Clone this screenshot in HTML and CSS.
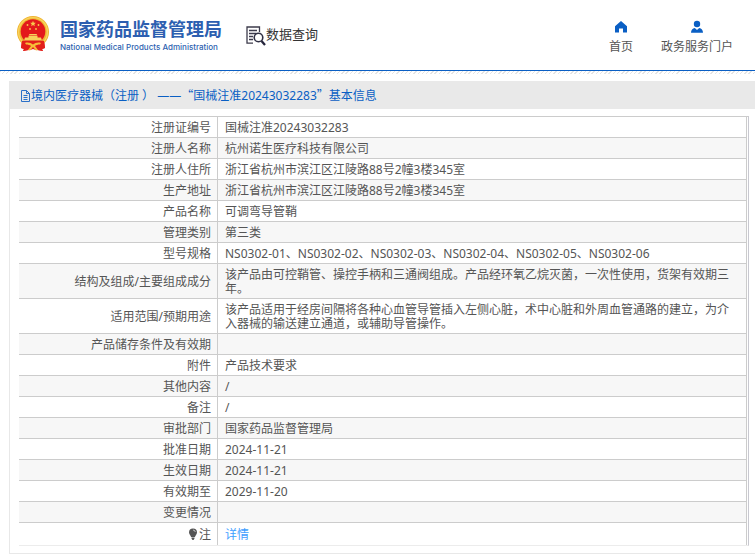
FILE: index.html
```html
<!DOCTYPE html>
<html lang="zh-CN">
<head>
<meta charset="utf-8">
<title>国家药品监督管理局 数据查询</title>
<meta name="viewport" content="width=device-width, initial-scale=1">
<link rel="stylesheet" href="styles.css">
</head>
<body>
<header class="header">
  <div class="brand">
    <svg class="emblem" viewBox="0 0 32 36" aria-hidden="true">
      <path d="M5 24h22l1 8-3 1 1 2-5-1-5-1-5 1-5 1 1-2-3-1z" fill="#e3201b"/>
      <circle cx="16" cy="16" r="16" fill="#efb431"/>
      <circle cx="16" cy="16" r="14.4" fill="none" stroke="#f8d35d" stroke-width="1.4"/>
      <circle cx="16" cy="15.5" r="12.3" fill="#e3181b"/>
      <path d="M5 25l5-1h12l5 1 1 7-3 1 1 2-6-1-4-1-4 1-6 1 1-2-3-1z" fill="#e3201b"/>
      <path d="M16 4.800l.8 1.900 2 .1-1.500 1.400.5 2L16 9.100l-1.800 1.100.5-2-1.500-1.400 2-.1z" fill="#f8ca4d"/>
      <g fill="#f8ca4d"><circle cx="10.500" cy="9" r=".9"/><circle cx="21.500" cy="9" r=".9"/><circle cx="13" cy="13" r=".9"/><circle cx="19" cy="13" r=".9"/></g>
      <path d="M12.500 18h7l1 1.500h-9zM11.500 20h9v1.500h3.500l1 3H7l1-3h3.500z" fill="#f7cf5a"/>
      <path d="M8 27c3-1 6 0 8 1.500 2-1.500 5-2.500 8-1.500l-1 1.500c-2 0-4 .5-5 1.500l3 4-2 .5-3-3.500-3 3.500-2-.5 3-4c-1-1-3-1.500-5-1.500z" fill="#f6bd38"/>
    </svg>
    <div class="brand-names">
      <span class="brand-cn">国家药品监督管理局</span>
      <span class="brand-en">National Medical Products Administration</span>
    </div>
  </div>
  <div class="query">
    <svg class="query-icon" viewBox="0 0 20 20" aria-hidden="true">
      <path d="M7 17.200H1V1h12.500v5M3 4.500h8M3 7.500h7M3 10.500h4M3 13.500h4" fill="none" stroke="#3c3b4b" stroke-width="1.300"/>
      <circle cx="12.500" cy="11.500" r="4.300" fill="#fff" stroke="#303044" stroke-width="1.600"/>
      <path d="M15.500 15l3.500 4" stroke="#25253c" stroke-width="2.300"/>
    </svg>
    <span>数据查询</span>
  </div>
  <nav class="nav">
    <a href="#home">
      <svg viewBox="0 0 14 14" aria-hidden="true"><path d="M7 1l6 5.300V12.500H9V8.500H5v4H1V6.300z" fill="#0a5fc4"/></svg>
      <span>首页</span>
    </a>
    <a href="#portal">
      <svg viewBox="0 0 14 14" aria-hidden="true"><circle cx="7" cy="4" r="3.200" fill="#0a5fc4"/><path d="M1 12.800c0-3 1.500-4.600 3.800-4.900L7 10l2.200-2.100c2.300.3 3.800 1.900 3.800 4.900z" fill="#0a5fc4"/></svg>
      <span>政务服务门户</span>
    </a>
  </nav>
</header>
<div class="hatch"></div>
<main class="panel">
  <h1 class="panel-title">
    <svg viewBox="0 0 11 12" aria-hidden="true"><path d="M1.500.5h5l3 3v8h-8zM6.500.5v3h3M3.500 5.500h4M3.500 7.500h4M3.500 9.500h4" fill="none" stroke="#2b70c8"/></svg>
    <span>境内医疗器械（注册 ） ——<span class="quote">“</span>国械注准20243032283<span class="quote">”</span>基本信息</span>
  </h1>
  <div class="table-wrap">
    <table class="info">
      <tbody>
        <tr><th scope="row">注册证编号</th><td>国械注准20243032283</td></tr>
        <tr><th scope="row">注册人名称</th><td>杭州诺生医疗科技有限公司</td></tr>
        <tr><th scope="row">注册人住所</th><td>浙江省杭州市滨江区江陵路88号2幢3楼345室</td></tr>
        <tr><th scope="row">生产地址</th><td>浙江省杭州市滨江区江陵路88号2幢3楼345室</td></tr>
        <tr><th scope="row">产品名称</th><td>可调弯导管鞘</td></tr>
        <tr><th scope="row">管理类别</th><td>第三类</td></tr>
        <tr><th scope="row">型号规格</th><td>NS0302-01、NS0302-02、NS0302-03、NS0302-04、NS0302-05、NS0302-06</td></tr>
        <tr><th scope="row">结构及组成/主要组成成分</th><td>该产品由可控鞘管、操控手柄和三通阀组成。产品经环氧乙烷灭菌，一次性使用，货架有效期三年。</td></tr>
        <tr><th scope="row">适用范围/预期用途</th><td>该产品适用于经房间隔将各种心血管导管插入左侧心脏，术中心脏和外周血管通路的建立，为介入器械的输送建立通道，或辅助导管操作。</td></tr>
        <tr><th scope="row">产品储存条件及有效期</th><td></td></tr>
        <tr><th scope="row">附件</th><td>产品技术要求</td></tr>
        <tr><th scope="row">其他内容</th><td>/</td></tr>
        <tr><th scope="row">备注</th><td>/</td></tr>
        <tr><th scope="row">审批部门</th><td>国家药品监督管理局</td></tr>
        <tr><th scope="row">批准日期</th><td>2024-11-21</td></tr>
        <tr><th scope="row">生效日期</th><td>2024-11-21</td></tr>
        <tr><th scope="row">有效期至</th><td>2029-11-20</td></tr>
        <tr><th scope="row">变更情况</th><td></td></tr>
        <tr class="note"><th scope="row"><svg viewBox="0 0 10 12" aria-hidden="true"><path d="M5 .5a4 4 0 0 1 4 4C9 6.500 7 7.500 7 9H3C3 7.500 1 6.500 1 4.500a4 4 0 0 1 4-4zM3.500 9.500h3v1L5.500 12h-1l-1-1.500z" fill="#555"/><path d="M5 2q2 0 2.300 2" fill="none" stroke="#ddd" stroke-width=".8"/></svg>注</th><td><a href="#detail">详情</a></td></tr>
      </tbody>
    </table>
  </div>
</main>
</body>
</html>
```
FILE: styles.css
```css
* {
  box-sizing: border-box;
}

body {
  margin: 0;
  background: #fff;
  color: #555;
  font: 12px/14px "Noto Sans", "Noto Sans CJK SC", sans-serif;
}

a {
  text-decoration: none;
}

.header {
  display: flex;
  align-items: flex-start;
  height: 71px;
  padding: 16px 22px 0 17px;
  border-bottom: 1px solid #0a5fc4;
}

.brand {
  display: flex;
  gap: 11px;
}

.emblem {
  width: 32px;
  height: 36px;
}

.brand-names {
  display: flex;
  flex-direction: column;
  color: #2d5fb0;
  white-space: nowrap;
}

.brand-cn {
  font: bold 18px/25px "Noto Sans CJK SC", sans-serif;
}

.brand-en {
  font: 500 8px/12px Inter, sans-serif;
}

.query {
  display: flex;
  align-items: flex-start;
  margin: 10px 0 0 24px;
  color: #333;
  font: 13px/16px "Noto Sans CJK SC", sans-serif;
}

.query-icon {
  width: 20px;
  height: 20px;
}

.nav {
  display: flex;
  gap: 28px;
  margin: 4px 0 0 auto;
}

.nav a {
  display: flex;
  flex-direction: column;
  align-items: center;
  gap: 6px;
  color: #555;
}

.nav svg {
  width: 14px;
  height: 14px;
}

.hatch {
  height: 3px;
  background: repeating-linear-gradient(135deg, #e4e4e4 0 1px, #fff 1px 3px);
}

.panel {
  margin: 7px 0 0 9px;
  padding-bottom: 7px;
  border-bottom: 1px solid #e8e8e8;
  border-left: 1px solid #e8e8e8;
}

.panel-title {
  display: flex;
  align-items: center;
  height: 28px;
  margin: 0;
  padding: 1px 0 0 10px;
  background: #e9e9e9;
  color: #0a5fc4;
  font-size: 12px;
  font-weight: 400;
}

.panel-title svg {
  width: 11px;
  height: 12px;
}

.quote {
  font-family: "Noto Sans CJK SC", sans-serif;
}

.table-wrap {
  margin: 7px 6px 0 9px;
  padding-right: 1px;
  border-top: 1px solid #ccc;
  border-right: 1px solid #c8c8d0;
  border-bottom: 1px solid #ececec;
}

.info {
  width: 100%;
  border-collapse: separate;
  border-spacing: 0;
  border-right: 1px solid #ccc;
  table-layout: fixed;
}

.info th,
.info td {
  padding: 4px 6px 2px;
  border-bottom: 1px solid #ccc;
  font-weight: 400;
}

.info th {
  width: 199px;
  border-right: 1px solid #ccc;
  text-align: right;
}

.info td {
  height: 21px;
  padding-left: 7px;
}

.info tr:nth-child(even) {
  background: #f7f7f7;
}

.info .note th,
.info .note td {
  height: 22px;
  border-bottom: 0;
}

.note svg {
  width: 10px;
  height: 12px;
  margin-right: 1px;
  vertical-align: -1px;
}

.note a {
  color: #409eff;
}
```
